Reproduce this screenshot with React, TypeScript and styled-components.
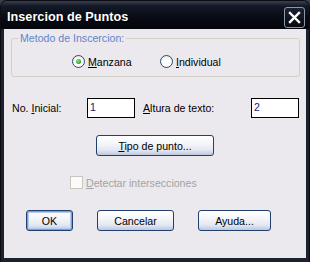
import React, { useState } from "react";
import styled, { createGlobalStyle } from "styled-components";

const GlobalStyle = createGlobalStyle`
  html, body {
    margin: 0;
    padding: 0;
    background: #3a3e48;
  }
  body {
    font-family: "Liberation Sans", Arial, sans-serif;
    font-size: 10.6px;
  }
`;

// ventana con marco oscuro
const Window = styled.div`
  width: 310px;
  height: 262px;
  box-sizing: border-box;
  display: flex;
  flex-direction: column;
  background: #1d212c;
  border-radius: 7px 7px 0 0;
  border: 1px solid #0a0c12;
  border-bottom: none;
  overflow: hidden;
`;

const TitleBar = styled.div`
  height: 28px;
  flex: none;
  display: flex;
  align-items: center;
  justify-content: space-between;
  padding: 0 4px 0 6px;
  background: linear-gradient(180deg, #3a4050 0%, #141927 18%, #080b14 60%, #04060c 100%);
`;

const Title = styled.span`
  color: #ffffff;
  font-weight: bold;
  font-size: 12.7px;
  padding-top: 3px;
  text-shadow: 1px 1px 0 #000;
`;

const CloseButton = styled.button`
  width: 21px;
  height: 21px;
  margin-top: 4px;
  padding: 0;
  display: flex;
  align-items: center;
  justify-content: center;
  border: 1px solid #8d97aa;
  border-radius: 3px;
  background: linear-gradient(180deg, #1c2232 0%, #070a12 100%);
`;

const Body = styled.div`
  flex: 1;
  margin: 0 3px 4px 3px;
  background: #ebe9ed;
  display: flex;
  flex-direction: column;
`;

const Group = styled.fieldset`
  margin: 3px 6px 0 7px;
  padding: 0;
  height: 45px;
  box-sizing: border-box;
  border: 1px solid #d2d0c6;
  border-radius: 3px;
`;

const Legend = styled.legend`
  margin-left: 6px;
  padding: 0 2px 0 2px;
  color: #6384c8;
  line-height: 13px;
`;

const RadioRow = styled.div`
  display: grid;
  grid-template-columns: 88px auto;
  padding: 10px 0 0 60px;
`;

const Choice = styled.label`
  display: flex;
  align-items: center;
  gap: 3px;
  color: #000;
  cursor: default;
`;

const RadioDot = styled.span<{ $on: boolean }>`
  width: 13px;
  height: 13px;
  box-sizing: border-box;
  border-radius: 50%;
  border: 1px solid #2b4c6e;
  background: radial-gradient(circle at 50% 60%, #ffffff 40%, #dcdad2 100%);
  display: flex;
  align-items: center;
  justify-content: center;
  &::after {
    content: "";
    display: ${({ $on }) => ($on ? "block" : "none")};
    width: 5px;
    height: 5px;
    border-radius: 50%;
    background: radial-gradient(circle at 40% 40%, #8ee08e 0%, #2ea12e 70%);
  }
`;

const FieldRow = styled.div`
  display: grid;
  grid-template-columns: 75px 48px 116px 48px;
  align-items: center;
  margin: 21px 0 0 8px;
`;

const FieldLabel = styled.span<{ $pad?: number }>`
  padding-left: ${({ $pad }) => $pad || 0}px;
  color: #000;
`;

const TextBox = styled.input`
  width: 48px;
  height: 20px;
  box-sizing: border-box;
  border: 1px solid #000;
  background: #fff;
  padding: 0 1px 3px 2px;
  margin: 0;
  font-family: "Liberation Sans", Arial, sans-serif;
  font-size: 10.6px;
  color: #1a1a6a;
  outline: none;
`;

const Button = styled.button<{ $w: number; $default?: boolean }>`
  width: ${({ $w }) => $w}px;
  height: 21px;
  padding: 0;
  margin: 0;
  box-sizing: border-box;
  border: 1px solid #21406f;
  border-radius: 3px;
  background: linear-gradient(180deg, #ffffff 0%, #f5f6fa 40%, #e2e7f1 75%, #bcc8de 100%);
  box-shadow: ${({ $default }) =>
    $default ? "inset 0 0 0 1px #7f9ddb, inset 0 0 0 2px #b6c9ef" : "none"};
  font-family: "Liberation Sans", Arial, sans-serif;
  font-size: 10.6px;
  color: #000;
`;

const CenterRow = styled.div`
  display: flex;
  justify-content: center;
  margin-top: 17px;
`;

const CheckRow = styled.label`
  display: flex;
  align-items: center;
  gap: 3px;
  margin: 20px 0 0 66px;
  color: #a3a2a0;
`;

const CheckBox = styled.span`
  width: 13px;
  height: 13px;
  box-sizing: border-box;
  border: 1px solid #c9c7bd;
  background: #fbfbfb;
`;

const ButtonRow = styled.div`
  display: flex;
  gap: 24px;
  margin: 21px 0 0 22px;
`;

export default function App() {
  const [metodo, setMetodo] = useState("manzana");

  return (
    <>
      <GlobalStyle />
      <Window>
        <TitleBar>
          <Title>Insercion de Puntos</Title>
          <CloseButton aria-label="Cerrar">
            <svg width="13" height="13" viewBox="0 0 13 13">
              <path d="M2 2 L11 11 M11 2 L2 11" stroke="#fff" strokeWidth="2.4" strokeLinecap="square" />
            </svg>
          </CloseButton>
        </TitleBar>
        <Body>
          <Group>
            <Legend>Metodo de Inscercion:</Legend>
            <RadioRow>
              <Choice onClick={() => setMetodo("manzana")}>
                <RadioDot $on={metodo === "manzana"} />
                <span><u>M</u>anzana</span>
              </Choice>
              <Choice onClick={() => setMetodo("individual")}>
                <RadioDot $on={metodo === "individual"} />
                <span><u>I</u>ndividual</span>
              </Choice>
            </RadioRow>
          </Group>

          <FieldRow>
            <FieldLabel>No. <u>I</u>nicial:</FieldLabel>
            <TextBox defaultValue="1" />
            <FieldLabel $pad={8}><u>A</u>ltura de texto:</FieldLabel>
            <TextBox defaultValue="2" />
          </FieldRow>

          <CenterRow>
            <Button $w={118}><u>T</u>ipo de punto...</Button>
          </CenterRow>

          <CheckRow>
            <CheckBox />
            <span><u>D</u>etectar intersecciones</span>
          </CheckRow>

          <ButtonRow>
            <Button $w={47} $default>OK</Button>
            <Button $w={77}>Cancelar</Button>
            <Button $w={73}>Ayuda...</Button>
          </ButtonRow>
        </Body>
      </Window>
    </>
  );
}
